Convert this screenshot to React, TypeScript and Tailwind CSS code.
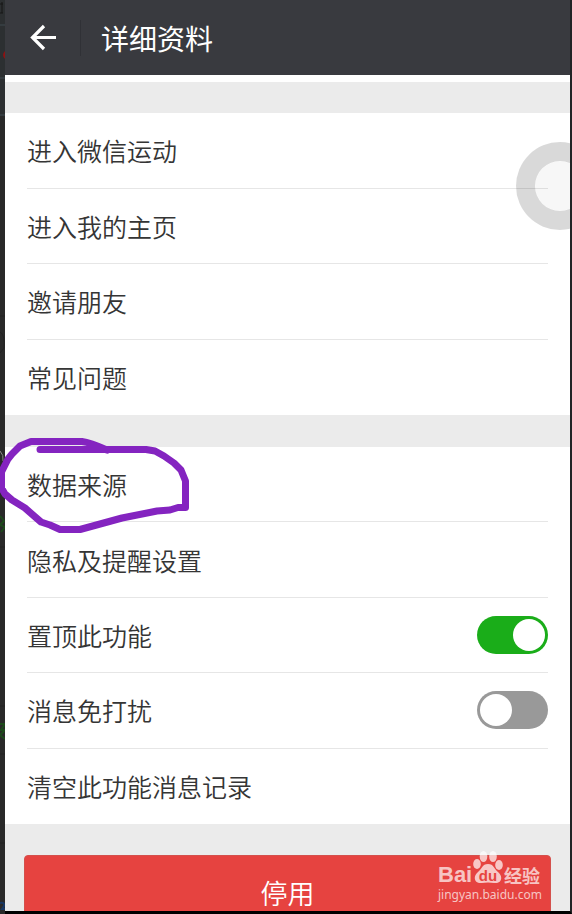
import { ReactNode } from 'react';

function Switch({ id, defaultChecked }: { id: string; defaultChecked?: boolean }) {
    return (
        <input
            id={id}
            type="checkbox"
            role="switch"
            defaultChecked={defaultChecked}
            className="h-[38px] w-[71px] shrink-0 appearance-none rounded-full bg-[#999999] p-[3px] before:block before:size-8 before:rounded-full before:bg-white checked:bg-[#1aad19] checked:before:ml-auto"
        />
    );
}

function Group({ children, className }: { children: ReactNode; className: string }) {
    return (
        <ul className={`grid auto-rows-fr bg-white px-[22px] ${className}`}>
            {children}
        </ul>
    );
}

function Row({ children }: { children: ReactNode }) {
    return (
        <li className="flex border-b border-[#e6e6e6] text-[25px] leading-9 font-[350] text-[#353535] last:border-b-0">
            {children}
        </li>
    );
}

function LinkRow({ label }: { label: string }) {
    return (
        <Row>
            <a href="#" className="flex flex-1 items-center">
                {label}
            </a>
        </Row>
    );
}

function SwitchRow({ id, label, on }: { id: string; label: string; on?: boolean }) {
    return (
        <Row>
            <div className="flex flex-1 items-center justify-between">
                <label htmlFor={id}>{label}</label>
                <Switch id={id} defaultChecked={on} />
            </div>
        </Row>
    );
}

// Hand-drawn ring around the data source entry
function InkRing() {
    return (
        <svg
            className="pointer-events-none absolute top-[430px] left-0"
            width="200"
            height="110"
            viewBox="0 430 200 110"
            fill="none"
            stroke="#8424c0"
            strokeWidth="7"
            strokeLinecap="round"
            strokeLinejoin="round"
        >
            <path d="M107 450C98 446 90 442.500 82 441.500H31L20 446L12 454L8 459L5 465L1.500 472V488L5 494L12 500L25 508L41 522L50 525L60 529.500H80L122 518L157 511L170 510L178 507.500H185.500V481L181 470L174 463L164 456L155 451L146 449.500H40" />
        </svg>
    );
}

// Sliver of the dimmed page that lies behind the left edge
function BackdropMarks() {
    return (
        <svg
            className="pointer-events-none absolute top-0 left-0"
            width="5"
            height="911"
            viewBox="0 0 5 911"
            fill="none"
        >
            <path d="M0 0H5V116H0Z" fill="#2c2f31" />
            <path d="M0 25H5M0 78H5M0 115H5" stroke="#353c40" strokeWidth="2" />
            <path d="M0 4H3M2 2V13M0 13H3" stroke="#161616" />
            <path d="M5 51Q1 55 5 59Z" fill="#8e1212" />
            <path d="M0 316H5M0 547H5M0 706H5M0 754H5M0 843H5" stroke="#222222" />
            <path d="M0 332Q5 334 4 348L0 353" stroke="#222222" />
            <path d="M0 451Q4 455 3 461" stroke="#8a8a8a" />
            <path d="M0 516L4 521L0 525L5 527L1 532" stroke="#1d4a1b" strokeWidth="2" />
            <path d="M0 724H5L1 730H5L0 735L5 739" stroke="#1d4a1b" strokeWidth="2" />
            <path d="M0 903Q5 902 4 906L2 909H5" stroke="#173763" strokeWidth="2" />
        </svg>
    );
}

function Watermark() {
    return (
        <div className="pointer-events-none absolute right-[30px] bottom-2 flex w-[102px] flex-col text-white/70">
            <div className="flex h-9 items-end justify-between">
                <span className="font-['Liberation_Sans'] text-[22px] leading-6 font-bold">Bai</span>
                <svg width="30" height="36" viewBox="0 0 30 36" fill="currentColor" className="shrink-0">
                    <ellipse cx="4" cy="13" rx="3.800" ry="5" />
                    <ellipse cx="10.500" cy="5.500" rx="3.800" ry="5.500" />
                    <ellipse cx="20" cy="5.500" rx="3.800" ry="5.500" />
                    <ellipse cx="26" cy="14" rx="3.800" ry="5" />
                    <path d="M15 13C9 13 9 18 5 21C-1 26 2 33 9 32Q15 31 21 32C28 33 31 26 25 21C21 18 21 13 15 13Z" />
                    <text
                        x="15"
                        y="30"
                        textAnchor="middle"
                        fill="#e64340"
                        className="font-['Liberation_Sans'] text-[15px] font-bold"
                    >
                        du
                    </text>
                </svg>
                <span className="text-[18px] leading-6 font-bold">经验</span>
            </div>
            <span className="font-['Noto_Sans'] text-[12px] leading-4">jingyan.baidu.com</span>
        </div>
    );
}

export default function App() {
    return (
        <div className="relative h-screen overflow-hidden bg-[#292929] font-['Noto_Sans_CJK_SC',sans-serif]">
            <BackdropMarks />
            <div className="relative ml-[5px] flex h-full flex-col overflow-hidden border-r-2 border-b-3 border-r-[#222325] border-b-black bg-[#ebebeb]">
                <header className="flex h-[75px] shrink-0 items-center bg-[#393a3f]">
                    <button
                        type="button"
                        aria-label="返回"
                        className="flex h-9 w-[76px] items-center justify-center border-r border-[#303136]"
                    >
                        <svg width="28" height="28" viewBox="0 0 28 28" fill="none" stroke="white" strokeWidth="3.200">
                            <path d="M27 13.500H3.500M15 2L3.500 13.500L15 25" />
                        </svg>
                    </button>
                    <h1 className="pl-5 text-[28px] leading-10 text-white">详细资料</h1>
                </header>
                <main className="min-h-0 flex-1 overflow-hidden">
                    <div className="h-[7px] bg-white" />
                    <Group className="mt-[31px] h-[302px]">
                        <LinkRow label="进入微信运动" />
                        <LinkRow label="进入我的主页" />
                        <LinkRow label="邀请朋友" />
                        <LinkRow label="常见问题" />
                    </Group>
                    <Group className="mt-8 h-[377px]">
                        <LinkRow label="数据来源" />
                        <LinkRow label="隐私及提醒设置" />
                        <SwitchRow id="pin" label="置顶此功能" on />
                        <SwitchRow id="mute" label="消息免打扰" />
                        <LinkRow label="清空此功能消息记录" />
                    </Group>
                    <div className="px-[19px] py-[31px]">
                        <button
                            type="button"
                            className="h-[76px] w-full rounded border border-[#d4504c] bg-[#e64340] text-[27px] font-[350] text-white"
                        >
                            停用
                        </button>
                    </div>
                </main>
                <div className="absolute top-[142px] -right-[34px] size-[88px] rounded-full border-[19px] border-black/15 bg-black/3 bg-clip-padding" />
                <Watermark />
            </div>
            <InkRing />
        </div>
    );
}
